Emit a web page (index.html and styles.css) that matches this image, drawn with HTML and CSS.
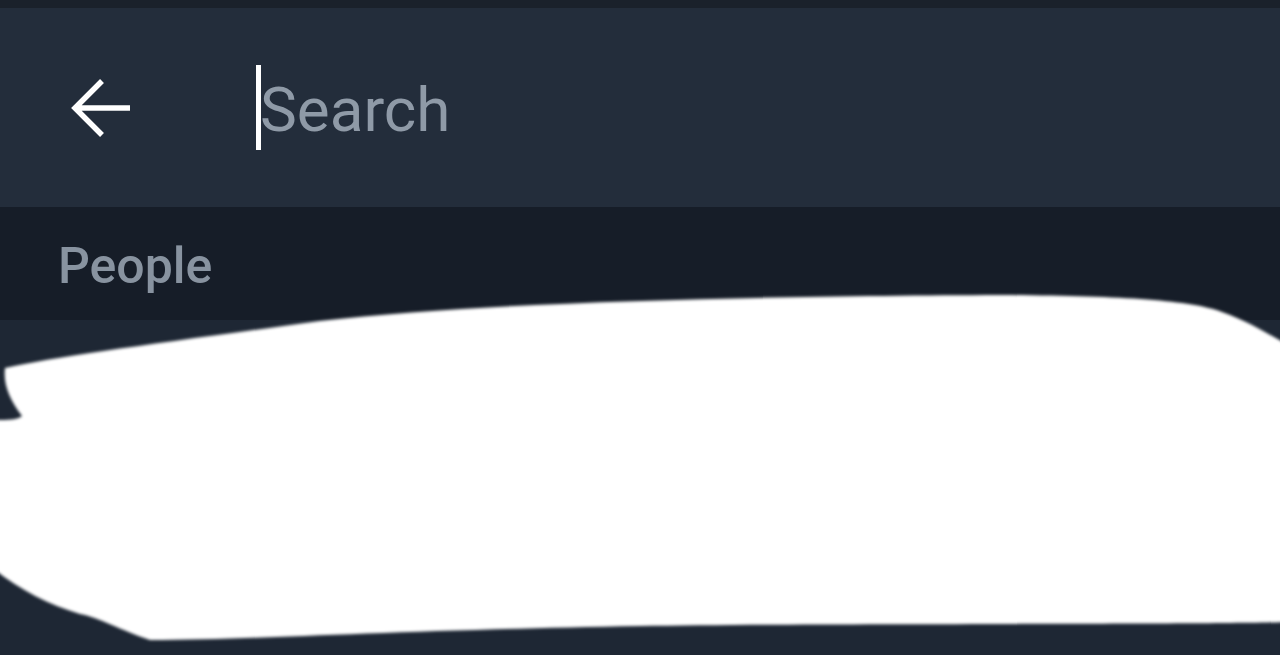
FILE: index.html
```html
<!DOCTYPE html>
<html lang="en">
<head>
    <meta charset="UTF-8">
    <meta name="viewport" content="width=device-width, initial-scale=1.0">
    <title>Search</title>
    <link rel="stylesheet" href="styles.css">
</head>
<body>
    <div class="page">
        <div class="status-strip"></div>

        <div class="toolbar">
            <button class="back-btn" aria-label="Back">
                <svg width="64" height="64" viewBox="0 0 64 64">
                    <path d="M61 32 H6 M33 5 L6 32 L33 59" fill="none" stroke="#ffffff" stroke-width="5.5" stroke-linejoin="miter"/>
                </svg>
            </button>
            <div class="search-field">
                <span class="caret"></span>
                <span class="placeholder">Search</span>
            </div>
        </div>

        <div class="section-header">People</div>

        <div class="results"></div>

        <!-- redaction over the people list -->
        <svg class="redaction" width="1280" height="655" viewBox="0 0 1280 655">
            <defs>
                <filter id="soft" x="-5%" y="-5%" width="110%" height="110%">
                    <feGaussianBlur stdDeviation="1.4"/>
                </filter>
            </defs>
            <path filter="url(#soft)" fill="#ffffff"
                d="M5 368 C60 356 160 343 320 321 C500 300 800 296 1000 295 C1120 296 1190 300 1222 312 C1250 322 1268 334 1290 346 L1290 622 C1200 625 800 623 640 626 C400 630 250 640 150 640 C120 630 100 618 80 614 C50 605 20 590 -5 570 L-5 420 C8 420 18 420 22 416 C10 400 3 385 5 368 Z"/>
        </svg>
    </div>
</body>
</html>
```

FILE: styles.css
```css
body {
    margin: 0;
    background-color: #1e2734;
    font-family: Roboto, "Liberation Sans", sans-serif;
    overflow: hidden;
}
.page {
    position: relative;
    width: 1280px;
    height: 655px;
    display: flex;
    flex-direction: column;
}
.status-strip {
    height: 8px;
    background-color: #1a212b;
}
.toolbar {
    height: 199px;
    background-color: #232d3b;
    display: flex;
    align-items: center;
}
.back-btn {
    width: 64px;
    height: 64px;
    margin-left: 69px;
    padding: 0;
    border: none;
    background: none;
    display: flex;
    align-items: center;
    justify-content: center;
}
.search-field {
    margin-left: 123px;
    display: flex;
    align-items: center;
}
.caret {
    width: 5px;
    height: 85px;
    background-color: #ffffff;
}
.placeholder {
    font-size: 62px;
    color: #8f9aa7;
    margin-left: -1px;
    margin-top: 4px;
}
.section-header {
    height: 113px;
    background-color: #161d28;
    display: flex;
    align-items: center;
    padding-left: 58px;
    padding-top: 4px;
    box-sizing: border-box;
    font-size: 50px;
    font-weight: 500;
    color: #8893a0;
}
.results {
    flex-grow: 1;
    background-color: #1e2734;
}
.redaction {
    position: absolute;
    left: 0;
    top: 0;
    pointer-events: none;
}
```
